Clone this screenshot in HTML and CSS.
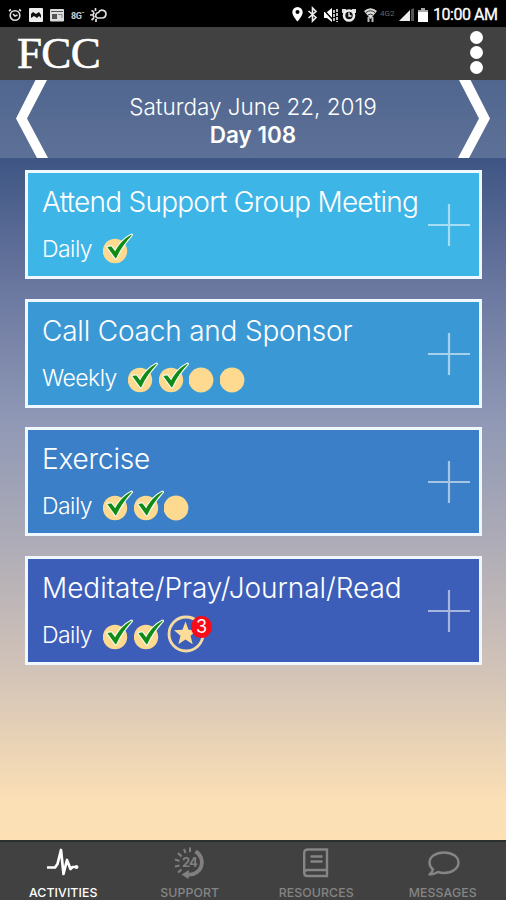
FILE: index.html
```html
<!DOCTYPE html>
<html>
<head lang="en">
    <meta charset="UTF-8">
    <title>FCC</title>
    <link rel="stylesheet" href="styles.css">
</head>
<body>
<svg class="defs">
    <symbol id="done" viewBox="0 0 30 34">
        <circle cx="12" cy="20" r="12.2" fill="#fdda8f"/>
        <path d="M4.8 16.200L8.300 15.800L12.200 21C16 13.500 21.500 7.500 28.500 4C22.500 10.500 17 18 12.800 27.200Z" fill="#128a16" stroke="#f2fbef" stroke-width="3" stroke-linejoin="round" paint-order="stroke"/>
        <path d="M4.8 16.200L8.300 15.800L12.200 21C16 13.500 21.500 7.500 28.500 4C22.500 10.500 17 18 12.800 27.200Z" fill="#128a16" stroke="#128a16" stroke-width=".5"/>
    </symbol>
    <symbol id="todo" viewBox="0 0 30 34">
        <circle cx="12" cy="20" r="12.4" fill="#fdda8f"/>
    </symbol>
    <symbol id="plus" viewBox="0 0 42 42">
        <path d="M21 0V42M0 21H42" fill="none" stroke="#fff" stroke-width="2.2"/>
    </symbol>
</svg>
<div class="phone">
    <div class="status">
        <div class="status-left">
            <svg width="14" height="14" viewBox="0 0 14 14" fill="none" stroke="#ddd" stroke-width="1.6"><circle cx="7" cy="7.5" r="4.8"/><path d="M1 3L3 1.5M13 3L11 1.5M5 6L7 8L9.5 7"/></svg>
            <svg width="14" height="14" viewBox="0 0 14 14"><rect width="14" height="14" rx="1" fill="#eee"/><path d="M2 10V6L4 4L7 6L10 4L12 7V10L10 8L8 10L5 8Z" fill="#111"/></svg>
            <svg width="14" height="14" viewBox="0 0 14 14"><rect y="1" width="14" height="12.5" rx="1" fill="#ddd"/><path d="M1 3.5H13" stroke="#555"/><rect x="2" y="6" width="5" height="5" fill="#555"/><path d="M8 6.5H12V10" stroke="#888" fill="none"/></svg>
            <span class="bg">8G<sup>&minus;</sup></span>
            <svg width="17" height="14" viewBox="0 0 17 14" fill="none" stroke="#ddd" stroke-width="1.7"><path d="M7 10H12A3.900 3.900 0 1 0 8.500 4.500A3 3 0 0 0 7 10"/><path d="M4.500 4.500A3 3 0 0 0 4.500 9.500M0 7H3M1.500 2.500L4 4M5.500 0V3M1.500 12L4 10M6 14V11"/></svg>
        </div>
        <div class="status-right">
            <svg width="11" height="15" viewBox="0 0 11 15"><path d="M5.5 0A5.2 5.2 0 0 0 .3 5.2C.3 9 5.5 14.5 5.5 14.5S10.7 9 10.7 5.2A5.2 5.2 0 0 0 5.5 0Z" fill="#fff"/><circle cx="5.5" cy="5" r="2" fill="#000"/></svg>
            <svg class="bluetooth" width="9" height="15" viewBox="0 0 9 15"><path d="M.5 4L8 10.5L4.500 14V1L8 4.500L.5 11" fill="none" stroke="#eee" stroke-width="1.600"/></svg>
            <svg class="mute" width="15" height="14" viewBox="0 0 15 14"><path d="M1 4H4L9 0V14L4 10H1Z" fill="#fff"/><path d="M0 1L11 13" stroke="#000" stroke-width="1.300"/><path d="M11 2V13M14 1V14" stroke="#ddd" stroke-width="1.700" stroke-dasharray="3 1"/></svg>
            <svg width="14" height="14" viewBox="0 0 14 14"><path d="M0 1H4V3H10V1H14V5H0Z" fill="#ddd"/><circle cx="7" cy="7.5" r="6.3" fill="#eee"/><circle cx="7" cy="7.5" r="3.7" fill="#111"/><path d="M7 4.5V8H9.5" stroke="#fff" stroke-width="1.3" fill="none"/></svg>
            <svg class="wifi" width="13" height="14" viewBox="0 0 13 14"><path d="M0 3Q6.500-2.500 13 3L6.500 11Z" fill="#ddd"/><path d="M2 4.500Q6.500 1 11 4.500M4 7Q6.500 5 9 7" fill="none" stroke="#333"/><path d="M4.500 9V14M8.500 9V14" stroke="#bbb" stroke-width="2"/></svg>
            <span class="lte">4G2</span>
            <svg width="15" height="13" viewBox="0 0 15 13"><path d="M0 13L11 2V13Z" fill="#eee"/><path d="M12 1.500L15 0V13H12Z" fill="#555"/></svg>
            <svg width="10" height="14" viewBox="0 0 10 14"><path d="M0 2H3V0H7V2H10V14H0Z" fill="#fff"/><path d="M0 2H3V0H7V2H10V4H0Z" fill="#aaa"/></svg>
            <span class="clock">10:00 AM</span>
        </div>
    </div>
    <div class="header">
        <h1>FCC</h1>
        <div class="menu"><i></i><i></i><i></i></div>
    </div>
    <div class="content">
        <div class="date">
            <svg width="33" height="78" viewBox="0 0 33 78"><path d="M20.500 0H32L12 38.500L33 78H22L1 38.500Z" fill="#fff"/></svg>
            <div class="date-text">
                <p class="today">Saturday June 22, 2019</p>
                <p class="day">Day 108</p>
            </div>
            <svg width="33" height="78" viewBox="0 0 33 78"><path d="M12.500 0H1L21 38.500L0 78H11L32 38.500Z" fill="#fff"/></svg>
        </div>
        <div class="cards">
            <div class="card c1">
                <div>
                    <h2 class="t1">Attend Support Group Meeting</h2>
                    <div class="row"><span>Daily</span><svg><use href="#done"/></svg></div>
                </div>
                <svg class="plus"><use href="#plus"/></svg>
            </div>
            <div class="card c2">
                <div>
                    <h2 class="t2">Call Coach and Sponsor</h2>
                    <div class="row"><span class="weekly">Weekly</span><svg><use href="#done"/></svg><svg><use href="#done"/></svg><svg><use href="#todo"/></svg><svg><use href="#todo"/></svg></div>
                </div>
                <svg class="plus"><use href="#plus"/></svg>
            </div>
            <div class="card c3">
                <div>
                    <h2 class="t3">Exercise</h2>
                    <div class="row"><span>Daily</span><svg><use href="#done"/></svg><svg><use href="#done"/></svg><svg><use href="#todo"/></svg></div>
                </div>
                <svg class="plus"><use href="#plus"/></svg>
            </div>
            <div class="card c4">
                <div>
                    <h2 class="t4">Meditate/Pray/Journal/Read</h2>
                    <div class="row"><span>Daily</span><svg><use href="#done"/></svg><svg><use href="#done"/></svg>
                        <div class="star">
                            <svg viewBox="0 0 38 38"><circle cx="19" cy="19" r="17" fill="none" stroke="#f5dba0" stroke-width="2.8"/><path d="M18.500 6.500L21.500 14.800L30 15.300L23.500 20.700L25.700 29.300L18.500 24.500L11.300 29.300L13.500 20.700L7 15.300L15.500 14.800Z" fill="#fbdc98"/></svg>
                            <b class="badge">3</b>
                        </div>
                    </div>
                </div>
                <svg class="plus"><use href="#plus"/></svg>
            </div>
        </div>
    </div>
    <div class="tabs">
        <div class="tab active">
            <svg width="32" height="32" viewBox="0 0 32 32" fill="none" stroke="#fff" stroke-width="2.7" stroke-linejoin="round"><path d="M0 20.500H8L10.500 17L14 3L16.500 27L20 13L23.500 22L25.500 20H29"/><circle cx="29.500" cy="20" r="1.500" fill="#fff" stroke-width="1"/></svg>
            <span>ACTIVITIES</span>
        </div>
        <div class="tab">
            <svg width="32" height="32" viewBox="0 0 32 32"><path d="M21.500 4.500A12.300 12.300 0 0 1 14 27.500" fill="none" stroke="#808080" stroke-width="3.800"/><path d="M15 23L7.500 27.500L14.500 32Z" fill="#808080"/><path d="M16 .5V5M10 2L11.500 6M4 6L7.500 9.500M1 12.500L5.500 14M1 19.500L5.500 18.500M4 25.500L7.500 22.500" stroke="#808080" stroke-width="2"/><text x="8" y="20" font-size="13" font-weight="bold" font-family="Inter" letter-spacing="-1" fill="#808080">24</text></svg>
            <span>SUPPORT</span>
        </div>
        <div class="tab">
            <svg width="26" height="32" viewBox="0 0 26 32" fill="none" stroke="#858585" stroke-width="2.4"><path d="M25 23H4.500Q1.200 23 1.200 26Q1.200 29 4.500 29H25M24 29V2.500H5Q1.200 2.500 1.200 6V26M7.500 9.500H19.500M7.500 14.500H19.500"/></svg>
            <span>RESOURCES</span>
        </div>
        <div class="tab">
            <svg width="32" height="32" viewBox="0 0 32 32" fill="none" stroke="#858585" stroke-width="2.4" stroke-linejoin="round"><path d="M17 5.500C9 5.500 2.500 9.500 2.500 15.500C2.500 18.500 3.800 20.600 6 22.500C5.700 24.500 4 26 2.500 27.500C6 27.500 8.500 26.500 11 25C13 25.700 15 26 17 26C25 26 31.500 21.500 31.500 15.500S25 5.500 17 5.500Z"/></svg>
            <span>MESSAGES</span>
        </div>
    </div>
</div>
</body>
</html>
```
FILE: styles.css
```css
*{
    margin: 0;
    padding: 0;
    box-sizing: border-box;
}
body{
    font-family: Inter, "Liberation Sans", sans-serif;
    color: #fff;
    background: #000;
}
svg{
    display: block;
    flex: none;
    overflow: visible;
}
.defs{
    display: none;
}
.phone{
    width: 506px;
    height: 900px;
    display: flex;
    flex-direction: column;
    overflow: hidden;
}
/* status bar */
.status{
    height: 27px;
    background: #000;
    display: flex;
    justify-content: space-between;
    align-items: center;
    padding: 2px 8px 0 8px;
    font-family: Roboto, sans-serif;
}
.status-left,.status-right{
    display: flex;
    align-items: center;
}
.status-left{
    gap: 7px;
}
.status-right{
    gap: 4px;
}
.bg{
    width: 12px;
    font-size: 9px;
    font-weight: bold;
    letter-spacing: -.5px;
    color: #ccc;
    white-space: nowrap;
}
.bg sup{
    font-size: 6px;
}
.bluetooth{
    margin-left: 1px;
}
.mute{
    margin-left: 2px;
}
.wifi{
    margin-left: 4px;
}
.lte{
    width: 15px;
    margin-left: -1px;
    padding-bottom: 3px;
    font-size: 8px;
    color: #666;
}
.clock{
    width: 65px;
    margin-left: 1px;
    font-size: 16px;
    line-height: 20px;
    letter-spacing: -.45px;
    -webkit-text-stroke: .3px #fff;
    white-space: nowrap;
}
/* header */
.header{
    height: 53px;
    background: #414141;
    display: flex;
    justify-content: space-between;
    padding: 0 23px 0 17px;
}
h1{
    font: 45px/52px "Liberation Serif", serif;
    letter-spacing: -.7px;
    -webkit-text-stroke: .6px #fff;
}
.menu{
    padding-top: 4px;
    display: flex;
    flex-direction: column;
    gap: 2px;
}
.menu i{
    width: 13px;
    height: 13px;
    border-radius: 50%;
    background: #fff;
}
/* main */
.content{
    flex: 1;
    background: linear-gradient(#38517f 0, #3f5684 80px, #6b78a0 210px, #8f98b5 340px, #aeacb7 465px, #d2c3b8 590px, #fbdfb5 720px, #fde1b5 100%);
}
.date{
    height: 78px;
    display: flex;
    justify-content: space-between;
    padding: 0 15px;
    background: linear-gradient(rgba(255,255,255,.12), rgba(255,255,255,.16));
}
.date-text{
    padding-top: 13px;
    text-align: center;
    font-size: 22.500px;
    line-height: 28px;
    white-space: nowrap;
}
.today{
    font-weight: 300;
}
.day{
    font-weight: 600;
}
.cards{
    padding: 12px 24px 0 25px;
    display: flex;
    flex-direction: column;
    gap: 19.600px;
}
.card{
    height: 109px;
    border: 3px solid #f0f8ff;
    padding: 0 9px 0 14px;
    display: flex;
    justify-content: space-between;
}
.c1{
    background: #3db5e6;
}
.c2{
    background: #3a99d5;
}
.c3{
    background: #3a7fc7;
}
.c4{
    background: #3d5eb8;
}
.card h2{
    width: 380px;
    padding-top: 11px;
    font-size: 28px;
    font-weight: 300;
    line-height: 36px;
    letter-spacing: -.2px;
    white-space: nowrap;
}
.card .t1{
    letter-spacing: -.75px;
}
.card .t4{
    letter-spacing: -.05px;
}
.row{
    height: 34px;
    margin-top: 11px;
    display: flex;
    align-items: center;
}
.row span{
    width: 61px;
    padding-top: 2px;
    font-size: 23px;
    font-weight: 300;
    line-height: 30px;
    letter-spacing: -.55px;
}
.row .weekly{
    width: 86px;
}
.row svg{
    width: 30px;
    height: 34px;
    margin-right: .5px;
}
.plus{
    width: 42px;
    height: 42px;
    margin-top: 31px;
    margin-left: -40px;
    opacity: .55;
}
.star{
    position: relative;
    margin-left: 3px;
}
.row .star svg{
    width: 38px;
    height: 38px;
}
.badge{
    position: absolute;
    left: 24px;
    top: 1px;
    width: 21px;
    height: 22px;
    border-radius: 50%;
    background: #f80c18;
    font-size: 18px;
    font-weight: 400;
    line-height: 22px;
    text-align: center;
}
/* bottom tabs */
.tabs{
    height: 60px;
    background: #414141;
    border-top: 2px solid #2b3131;
    display: flex;
}
.tab{
    flex: 1;
    display: flex;
    flex-direction: column;
    align-items: center;
    color: #858585;
}
.tab svg{
    margin-top: 5px;
}
.tab span{
    margin-top: 5px;
    font-size: 12.300px;
    font-weight: 500;
    line-height: 18px;
    letter-spacing: .1px;
}
.tab.active{
    color: #fff;
}
```
